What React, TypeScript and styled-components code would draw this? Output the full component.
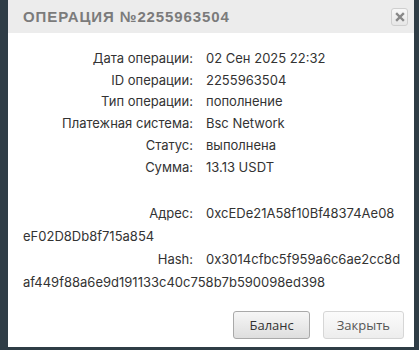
import React from "react";
import styled, { createGlobalStyle } from "styled-components";

const Global = createGlobalStyle`
  html, body { margin: 0; padding: 0; }
  body { background: #2f3d46; width: 419px; height: 350px; overflow: hidden; }
`;

const Page = styled.div`
  padding: 0 5px 0 8px;
  height: 350px;
  box-sizing: border-box;
`;

const Dialog = styled.div`
  width: 406px;
  height: 347px;
  background: #fff;
  display: flex;
  flex-direction: column;
  box-sizing: border-box;
`;

const TitleBar = styled.div`
  height: 33px;
  background: #ececec;
  display: flex;
  align-items: center;
  justify-content: space-between;
  padding: 0 6px 0 15px;
  flex-shrink: 0;
`;

const Title = styled.div`
  font-family: "Liberation Sans", Arial, sans-serif;
  font-weight: bold;
  font-size: 15px;
  letter-spacing: 0.9px;
  color: #7b7b7b;
`;

const CloseBtn = styled.button`
  width: 17px;
  height: 18px;
  padding: 0;
  border: 1px solid #cfcfcf;
  border-radius: 3px;
  background: linear-gradient(#f8f8f8, #e6e6e6);
  display: flex;
  align-items: center;
  justify-content: center;
  margin-top: 1px;
`;

const Content = styled.div`
  flex: 1;
  padding: 15px 13px 0 15px;
  font-family: Inter, "Liberation Sans", sans-serif;
  font-size: 13px;
  color: #333;
`;

const Row = styled.div<{ $lh?: number }>`
  line-height: ${(p) => p.$lh ?? 21.7}px;
  word-break: break-all;
`;

const Label = styled.span`
  display: inline-block;
  width: 170px;
  margin-right: 13px;
  text-align: right;
  word-break: normal;
`;

const Spacer = styled.div`
  height: 24px;
`;

const Footer = styled.div`
  display: flex;
  justify-content: flex-end;
  gap: 13px;
  padding: 0 10px 8px 0;
`;

const Button = styled.button<{ $primary?: boolean }>`
  height: 28px;
  padding: 0 ${(p) => (p.$primary ? 15 : 13)}px;
  font-family: "Open Sans", sans-serif;
  font-size: 13px;
  color: ${(p) => (p.$primary ? "#333" : "#555")};
  border: 1px solid ${(p) => (p.$primary ? "#a9a9a9" : "#d6d6d6")};
  border-radius: 3px;
  background: ${(p) =>
    p.$primary
      ? "linear-gradient(#f6f6f6, #dedede)"
      : "linear-gradient(#fbfbfb, #ededed)"};
`;

const rows: [string, string][] = [
  ["Дата операции:", "02 Сен 2025 22:32"],
  ["ID операции:", "2255963504"],
  ["Тип операции:", "пополнение"],
  ["Платежная система:", "Bsc Network"],
  ["Статус:", "выполнена"],
  ["Сумма:", "13.13 USDT"],
];

export default function App() {
  return (
    <Page>
      <Global />
      <Dialog>
        <TitleBar>
          <Title>ОПЕРАЦИЯ №2255963504</Title>
          <CloseBtn aria-label="close">
            <svg width="10" height="10" viewBox="0 0 10 10">
              <path d="M2 2 L8 8 M8 2 L2 8" stroke="#888" strokeWidth="2.4" strokeLinecap="square" />
            </svg>
          </CloseBtn>
        </TitleBar>
        <Content>
          {rows.map(([l, v]) => (
            <Row key={l}>
              <Label>{l}</Label>
              {v}
            </Row>
          ))}
          <Spacer />
          <Row $lh={23}>
            <Label>Адрес:</Label>
            0xcEDe21A58f10Bf48374Ae08eF02D8Db8f715a854
          </Row>
          <Row $lh={23}>
            <Label>Hash:</Label>
            0x3014cfbc5f959a6c6ae2cc8daf449f88a6e9d191133c40c758b7b590098ed398
          </Row>
        </Content>
        <Footer>
          <Button $primary>Баланс</Button>
          <Button>Закрыть</Button>
        </Footer>
      </Dialog>
    </Page>
  );
}
